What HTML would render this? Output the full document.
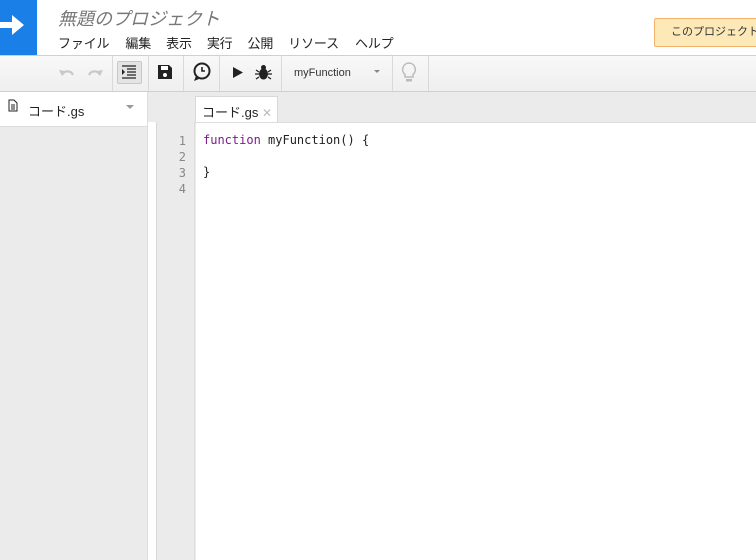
<!DOCTYPE html>
<html><head><style>
body{margin:0;width:756px;height:560px;overflow:hidden;font-family:"Liberation Sans","Noto Sans CJK JP",sans-serif;background:#fff;position:relative}
.a{position:absolute}
.sep{position:absolute;top:56px;height:35px;width:1px;background:#d9d9d9}
</style></head><body>
<div class="a" style="left:0;top:0;width:37px;height:55px;background:#1a7fe6"></div>
<svg class="a" style="left:0;top:12px" width="28" height="26"><path d="M0 10h12V3l12 10-12 10v-7H0z" fill="#fff"/></svg>
<div class="a" style="left:58px;top:5px;font-size:18px;font-style:italic;color:#777">無題のプロジェクト</div>
<div class="a" style="left:58px;top:33px;font-size:13px;color:#222;letter-spacing:-0.15px">
<span style="margin-right:16px">ファイル</span><span style="margin-right:15px">編集</span><span style="margin-right:15px">表示</span><span style="margin-right:15px">実行</span><span style="margin-right:15px">公開</span><span style="margin-right:16px">リソース</span><span>ヘルプ</span></div>
<div class="a" style="left:654px;top:18px;width:110px;height:29px;background:#fde8b8;border:1px solid #f5b26a;border-radius:2px;box-sizing:border-box;font-size:11px;color:#333;line-height:27px;padding-left:16px">このプロジェクト</div>
<div class="a" style="left:0;top:55px;width:756px;height:1px;background:#d0d0d0"></div>
<div class="a" style="left:0;top:56px;width:756px;height:35px;background:linear-gradient(#f8f8f8,#efefef)"></div>
<div class="a" style="left:0;top:91px;width:756px;height:1px;background:#d0d0d0"></div>
<div class="sep" style="left:112px"></div><div class="sep" style="left:148px"></div><div class="sep" style="left:183px"></div><div class="sep" style="left:219px"></div><div class="sep" style="left:281px"></div><div class="sep" style="left:392px"></div><div class="sep" style="left:428px"></div>
<svg class="a" style="left:59px;top:66px" width="44" height="12"><path d="M3 9a6 6 0 0 1 11 0" fill="none" stroke="#c8c8c8" stroke-width="2.2"/><path d="M0 4l6 1-3 5z" fill="#c8c8c8"/><path d="M41 9a6 6 0 0 0-11 0" fill="none" stroke="#c8c8c8" stroke-width="2.2"/><path d="M44 4l-6 1 3 5z" fill="#c8c8c8"/></svg>
<div class="a" style="left:117px;top:61px;width:25px;height:23px;background:#e4e4e4;border:1px solid #c8c8c8;box-sizing:border-box;border-radius:2px"></div>
<svg class="a" style="left:121px;top:65px" width="16" height="14"><path d="M1 1h14M6 4h9M6 7h9M6 10h9M1 13h14" stroke="#222" stroke-width="1.3"/><path d="M1 4l3 3-3 3z" fill="#222"/></svg>
<svg class="a" style="left:157px;top:64px" width="16" height="16"><path d="M1 1h11l3 3v11H1z" fill="#222"/><rect x="4" y="2" width="7" height="4" fill="#fff"/><circle cx="8" cy="11" r="2" fill="#fff"/></svg>
<svg class="a" style="left:192px;top:62px" width="20" height="20"><circle cx="10" cy="9" r="7.5" fill="none" stroke="#222" stroke-width="2"/><path d="M10 5v4h3" stroke="#222" stroke-width="1.6" fill="none"/><path d="M4 14l-2 5 5-2z" fill="#222"/></svg>
<svg class="a" style="left:232px;top:66px" width="12" height="13"><path d="M1 1l10 5.5L1 12z" fill="#222"/></svg>
<svg class="a" style="left:255px;top:64px" width="17" height="16"><ellipse cx="8.5" cy="10" rx="4.5" ry="5.5" fill="#222"/><circle cx="8.5" cy="3.5" r="2.5" fill="#222"/><path d="M1 6l3 2M16 6l-3 2M0 10h4M13 10h4M1 15l3-2M16 15l-3-2" stroke="#222" stroke-width="1.3"/></svg>
<div class="a" style="left:294px;top:67px;font-size:11px;color:#333">myFunction</div>
<div class="a" style="left:374px;top:70px;width:0;height:0;border:3px solid transparent;border-top:3px solid #888"></div>
<svg class="a" style="left:401px;top:62px" width="16" height="22"><path d="M8 1a6.5 6.5 0 0 0-4 11.5V15h8v-2.5A6.5 6.5 0 0 0 8 1z" fill="none" stroke="#bbb" stroke-width="1.5"/><rect x="5" y="17" width="6" height="2.5" fill="#bbb"/></svg>
<div class="a" style="left:0;top:92px;width:147px;height:468px;background:#ebebeb"></div>
<div class="a" style="left:0;top:92px;width:147px;height:34px;background:#fff;border-bottom:1px solid #ddd"></div>
<svg class="a" style="left:8px;top:99px" width="10" height="13"><path d="M1 1h5l3 3v8H1z" fill="none" stroke="#222"/><path d="M3 6h4M3 8h4M3 10h4" stroke="#222"/></svg>
<div class="a" style="left:28px;top:101px;font-size:13px;color:#222">コード.gs</div>
<div class="a" style="left:126px;top:105px;border:4px solid transparent;border-top:4px solid #999"></div>
<div class="a" style="left:147px;top:92px;width:1px;height:468px;background:#ddd"></div>
<div class="a" style="left:148px;top:92px;width:608px;height:30px;background:#ebebeb"></div>
<div class="a" style="left:156px;top:122px;width:39px;height:438px;background:#ebebeb;border-left:1px solid #d8d8d8"></div>
<div class="a" style="left:194px;top:122px;width:1px;height:438px;background:#ddd"></div>
<div class="a" style="left:195px;top:96px;width:83px;height:27px;background:#fff;border:1px solid #d8d8d8;border-bottom:none;box-sizing:border-box"></div>
<div class="a" style="left:202px;top:102px;font-size:13px;color:#222">コード.gs <span style="color:#bbb;font-size:12px">✕</span></div>
<div class="a" style="left:195px;top:122px;width:561px;height:1px;background:#ddd"></div>
<div class="a" style="left:160px;top:133px;width:26px;text-align:right;font-family:'DejaVu Sans Mono',monospace;font-size:12px;line-height:16px;color:#888">1<br>2<br>3<br>4</div>
<div class="a" style="left:203px;top:132px;font-family:'DejaVu Sans Mono',monospace;font-size:12px;line-height:16px;color:#222;white-space:pre"><span style="color:#7a1c8a">function</span> myFunction() {

}</div>
</body></html>
